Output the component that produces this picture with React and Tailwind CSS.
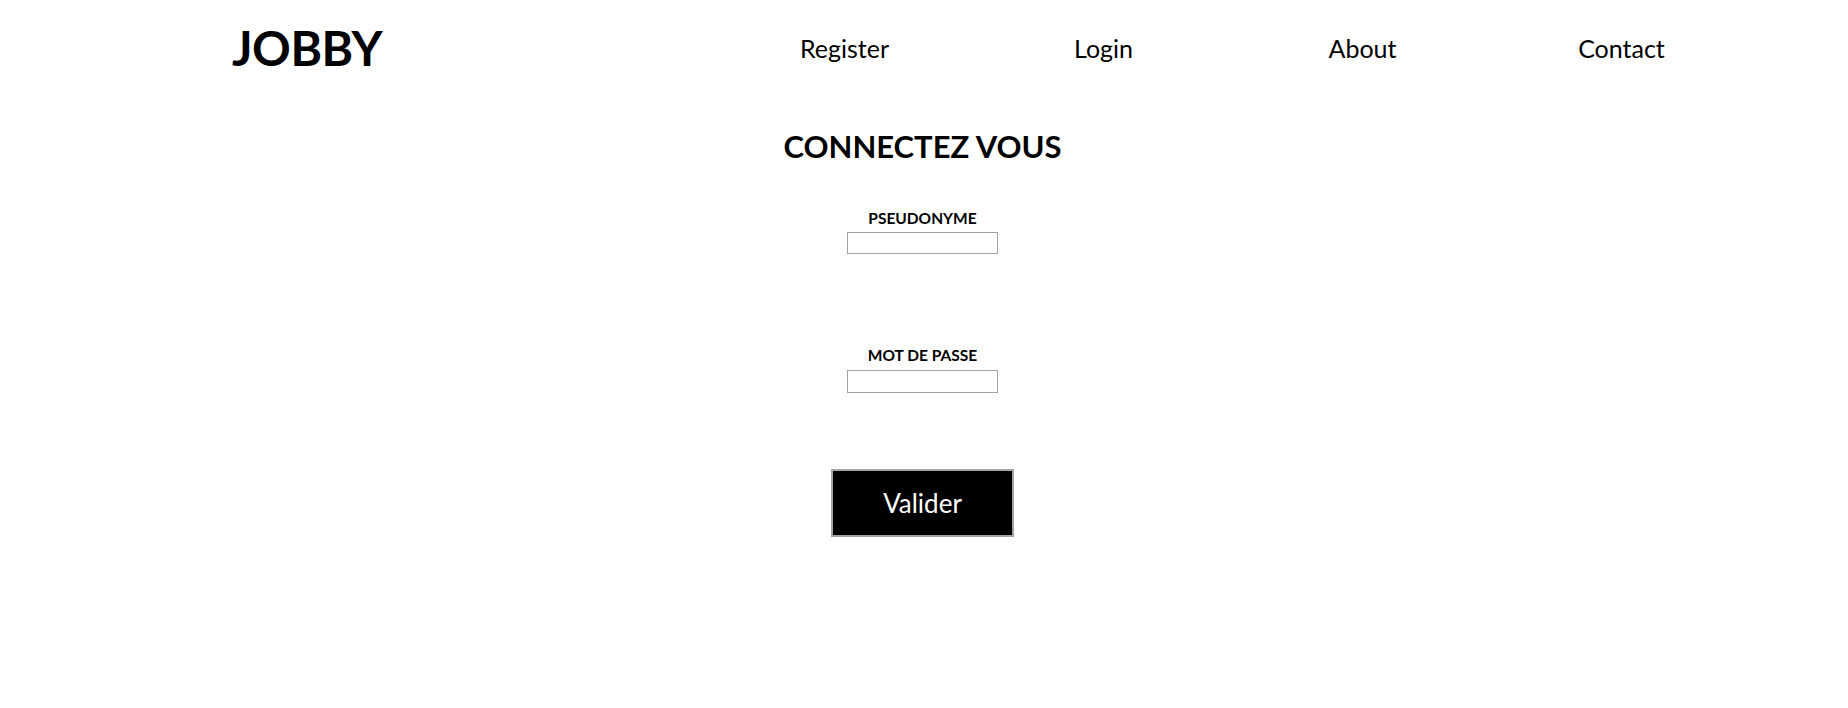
import React from 'react';

const links = ['Register', 'Login', 'About', 'Contact'];

export default function App() {
  return (
    <div className="min-h-screen bg-white text-black" style={{ fontFamily: 'Lato, "Open Sans", sans-serif' }}>
      {/* Header */}
      <header className="flex h-[96px] items-center pl-[232px] pr-[97px]">
        <h1 className="text-[48px] font-bold leading-none tracking-[-0.5px]">JOBBY</h1>
        <nav className="ml-auto flex w-[1036px]">
          {links.map((l) => (
            <a key={l} href="#" className="w-[259px] text-center text-[25px] leading-none">
              {l}
            </a>
          ))}
        </nav>
      </header>

      {/* Login form */}
      <main className="flex flex-col items-center pr-[3px]">
        <h2 className="mt-[30px] text-[31px] font-bold leading-[40px]">CONNECTEZ VOUS</h2>

        <form className="flex flex-col items-center" onSubmit={(e) => e.preventDefault()}>
          <label className="mt-[42px] text-[15.5px] font-bold leading-[20px]">PSEUDONYME</label>
          <input type="text" className="mt-[4px] h-[22px] w-[151px] border border-[#a3a3a3] outline-none" />

          <label className="mt-[91px] text-[15.5px] font-bold leading-[20px]">MOT DE PASSE</label>
          <input type="password" className="mt-[5px] h-[23px] w-[151px] border border-[#a3a3a3] outline-none" />

          <button
            type="submit"
            className="mt-[76px] h-[68px] w-[183px] border-2 border-[#a3a3a3] bg-black text-[26px] leading-none text-white"
          >
            Valider
          </button>
        </form>
      </main>
    </div>
  );
}
